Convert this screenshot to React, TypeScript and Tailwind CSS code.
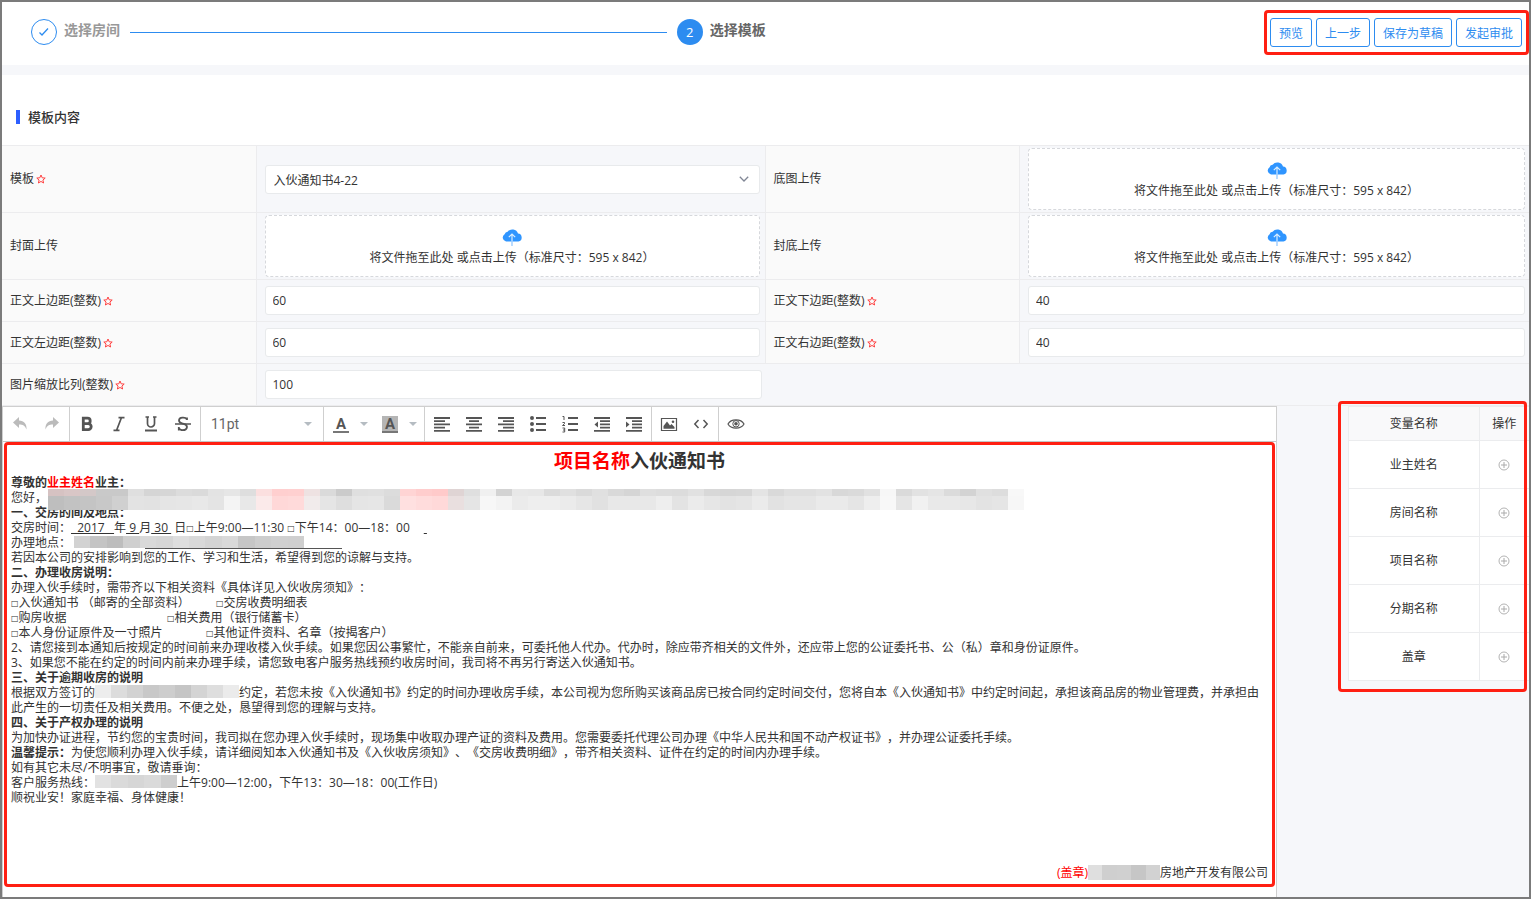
import type { ReactNode } from "react";

const variables = ["业主姓名", "房间名称", "项目名称", "分期名称", "盖章"];

const noticeMask = [
  ["#d6c2c2", "#bebebe"], ["#d9c6c6", "#c2c2c2"], ["#d4c8c8", "#c4c4c4"], ["#c9c9c9", "#c8c8c8"], ["#c9c9c9", "#d0d0d0"],
  ["#dfdfdf", "#e3e3e3"], ["#d5d5d5", "#e2e2e2"], ["#d6d6d6", "#e5e5e5"], ["#dcdcdc", "#e6e6e6"], ["#dadada", "#e8e8e8"],
  ["#e3e3e3", "#e4e4e4"], ["#e6e6e6", "#f4f4f4"], ["#dedede", "#e8e8e8"], ["#fbdfdf", "#fbeaea"], ["#ffcfcf", "#ffd8d8"],
  ["#ffd0d0", "#ffdada"], ["#eee2e2", "#f1ebeb"], ["#dadada", "#e5e5e5"], ["#cbcbcb", "#dedede"], ["#dfdfdf", "#e5e5e5"],
  ["#e0e0e0", "#e6e6e6"], ["#dcdcdc", "#dadada"], ["#ffd4d4", "#ffe0e0"], ["#ffcdcd", "#ffdcdc"], ["#ffcaca", "#ffd9d9"],
  ["#dfd4d4", "#e9dfdf"], ["#dfdfdf", "#e5e5e5"], ["#f0f0f0", "#f7f7f7"], ["#d3d3d3", "#f3f3f3"], ["#e8e8e8", "#ebebeb"],
  ["#e7e7e7", "#eeeeee"], ["#dbdbdb", "#eeeeee"], ["#e0e0e0", "#ebebeb"], ["#dadada", "#e6e6e6"], ["#e0e0e0", "#e1e1e1"],
  ["#d9d9d9", "#e8e8e8"], ["#d5d5d5", "#e8e8e8"], ["#dfdfdf", "#e8e8e8"], ["#dddddd", "#eeeeee"], ["#dcdcdc", "#e3e3e3"],
  ["#e1e1e1", "#ebebeb"], ["#d8d8d8", "#e6e6e6"], ["#d6d6d6", "#e3e3e3"], ["#d7d7d7", "#e5e5e5"], ["#e4e4e4", "#ebebeb"],
  ["#d9d9d9", "#e2e2e2"], ["#dfdfdf", "#e5e5e5"], ["#dfdfdf", "#e5e5e5"], ["#e2e2e2", "#eaeaea"], ["#d8d8d8", "#eaeaea"],
  ["#dadada", "#e5e5e5"], ["#e1e1e1", "#eeeeee"], ["#f7f7f7", "#f8f8f8"], ["#dadada", "#e5e5e5"], ["#e2e2e2", "#f1f1f1"],
  ["#e5e5e5", "#e9e9e9"], ["#dbdbdb", "#e9e9e9"], ["#d3d3d3", "#e7e7e7"], ["#e0e0e0", "#e3e3e3"], ["#dddddd", "#e5e5e5"],
  ["#f8f8f8", "#f7f7f7"],
];

const addressMask = ["#d2d2d2", "#c4c4c4", "#bdbdbd", "#cfcfcf", "#d9d9d9", "#d6d6d6", "#dedede", "#d9d9d9", "#d4d4d4", "#d9d9d9", "#c6c6c6", "#cdcdcd", "#d0d0d0", "#cfcfcf"];
const contractMask = ["#ededed", "#dcdcdc", "#d2d2d2", "#c8c8c8", "#cdcdcd", "#c5c5c5", "#d4d4d4", "#dedede", "#ebebeb"];
const phoneMask = ["#e2e2e2", "#dadada", "#d6d6d6", "#dadada", "#cecece"];
const companyMask = ["#dfdfdf", "#cfcfcf", "#d0d0d0", "#c6c6c6", "#d2d2d2"];

function Mask({ colors, className }: { colors: string[]; className: string }) {
  return (
    <span className={`overflow-hidden ${className}`} aria-hidden>
      {colors.map((color, index) => (
        <span key={index} className="flex-1" style={{ background: color }} />
      ))}
    </span>
  );
}

function RequiredStar() {
  return (
    <svg viewBox="0 0 20 20" className="ml-[2px] size-[10px] shrink-0" aria-hidden>
      <path d="M10 2l2.4 5.6 6 .5-4.6 4 1.4 5.9-5.2-3.1L4.800 18l1.400-5.900-4.600-4 6-.5z" fill="none" stroke="#ff4141" strokeWidth="2" strokeLinejoin="round" />
    </svg>
  );
}

function FieldLabel({ htmlFor, required, children }: { htmlFor: string; required?: boolean; children: ReactNode }) {
  return (
    <label htmlFor={htmlFor} className="flex items-center border-r border-b border-[#ececee] bg-[#fafafa] pl-2">
      {children}
      {required && <RequiredStar />}
    </label>
  );
}

function FieldCell({ last, children }: { last?: boolean; children: ReactNode }) {
  return (
    <div className={`flex items-center border-b border-[#ececee] pl-2 ${last ? "pr-1" : "border-r pr-[5px]"}`}>{children}</div>
  );
}

function NumberField({ id, label, value, last }: { id: string; label: string; value: string; last?: boolean }) {
  return (
    <>
      <FieldLabel htmlFor={id} required>
        {label}
      </FieldLabel>
      <FieldCell last={last}>
        <input
          id={id}
          defaultValue={value}
          className="my-[6px] h-[29px] w-full rounded-[3px] border border-[#e8eaec] bg-white px-[7px] outline-none"
        />
      </FieldCell>
    </>
  );
}

function UploadField({ id, label, last }: { id: string; label: string; last?: boolean }) {
  return (
    <>
      <FieldLabel htmlFor={id}>{label}</FieldLabel>
      <FieldCell last={last}>
        <button
          id={id}
          type="button"
          className="my-[2px] flex h-[62px] w-full flex-col items-center justify-center gap-1 rounded-[4px] border border-dashed border-[#d6d8dc] bg-white pt-[2px]"
        >
          <svg viewBox="0 0 20 17" className="h-[17px] w-5" aria-hidden>
            <path d="M4 12.500A4 4 0 0 1 2.600 5.200 4 4 0 0 1 5.600 2.700 6 6 0 0 1 16 4.600a4 4 0 0 1 .5 7.900z" fill="#2f95ff" />
            <path d="M10 5.200V12.500M6.800 8.200L10 5l3.200 3.200" fill="none" stroke="#d9edff" strokeWidth="1.200" />
            <path d="M10 12.500V17" stroke="#8cc4ff" strokeWidth="1.200" />
          </svg>
          <span className="leading-4">将文件拖至此处 或点击上传（标准尺寸：595 x 842）</span>
        </button>
      </FieldCell>
    </>
  );
}

function ToolButton({ label, children }: { label: string; children: ReactNode }) {
  return (
    <button type="button" aria-label={label} className="flex h-8 w-8 items-center justify-center text-[#555]">
      <svg viewBox="0 0 18 18" className="size-[18px]" fill="none" stroke="currentColor" strokeWidth="2" aria-hidden>
        {children}
      </svg>
    </button>
  );
}

function Caret() {
  return <span className="block border-x-4 border-t-4 border-x-transparent border-t-[#b5bcc2]" aria-hidden />;
}

function ColorButton({ label, filled }: { label: string; filled?: boolean }) {
  return (
    <button type="button" aria-label={label} className="flex h-8 w-[49px] items-center pl-2">
      <span
        className={`mr-[11px] h-[17px] w-4 border-b-2 border-[#777] text-center font-[Roboto,sans-serif] text-[15px] leading-4 font-bold text-[#555] ${filled ? "bg-[#b5b5b5]" : ""}`}
      >
        A
      </span>
      <Caret />
    </button>
  );
}

function ToolGroup({ children }: { children: ReactNode }) {
  return <div className="flex items-center border-r border-[#cfcfcf] px-px">{children}</div>;
}

function Toolbar() {
  return (
    <div className="flex h-[35px] border-b border-[#c5c5c5]">
      <ToolGroup>
        <ToolButton label="撤销">
          <path d="M8 2L2 7.500 8 13V9.500c4 0 6 1 7.500 5C16 9 13 5.500 8 5.500z" fill="#bbb" stroke="none" />
        </ToolButton>
        <ToolButton label="重做">
          <path d="M10 2l6 5.500L10 13V9.500c-4 0-6 1-7.500 5C2 9 5 5.500 10 5.500z" fill="#bbb" stroke="none" />
        </ToolButton>
      </ToolGroup>
      <ToolGroup>
        <ToolButton label="加粗">
          <path d="M5.300 3.200h4.200a2.700 2.700 0 0 1 0 5.400H5.300zM5.300 8.600h4.900a3 3 0 0 1 0 6H5.300z" strokeWidth="2.800" />
        </ToolButton>
        <ToolButton label="斜体">
          <path d="M8.500 2.700h6M3.500 15.300h6M11.500 2.500L6.500 15.500" strokeWidth="1.700" />
        </ToolButton>
        <ToolButton label="下划线">
          <path d="M5.500 2v6.500a3.500 3.500 0 0 0 7 0V2M3.500 2H7M11 2h3.500" strokeWidth="1.700" />
          <path d="M3 15.500h12" />
        </ToolButton>
        <ToolButton label="删除线">
          <path d="M13 5V2.500M13 4.500C11.500 1.800 5 2 5 5.500c0 3 3.500 2.800 5.500 3.700 4 1.600 2.800 6-1.500 6-2.500 0-3.700-1.200-4.200-2.500M4.800 15.500V12" strokeWidth="1.800" />
          <path d="M1 9h16" strokeWidth="1.500" />
        </ToolButton>
      </ToolGroup>
      <div className="relative flex w-[123px] items-center border-r border-[#cfcfcf]">
        <select
          aria-label="字号"
          className="w-full appearance-none bg-transparent pl-[10px] font-[Roboto,sans-serif] text-sm text-[#666] outline-none"
        >
          <option>11pt</option>
        </select>
        <span className="pointer-events-none absolute right-[11px]">
          <Caret />
        </span>
      </div>
      <ToolGroup>
        <ColorButton label="文字颜色" />
        <ColorButton label="背景颜色" filled />
      </ToolGroup>
      <ToolGroup>
        <ToolButton label="左对齐">
          <path d="M1 3h16M1 6.200h11M1 9.400h16M1 12.600h11M1 15.800h16" strokeWidth="1.800" />
        </ToolButton>
        <ToolButton label="居中">
          <path d="M1 3h16M4 6.200h10M1 9.400h16M4 12.600h10M1 15.800h16" strokeWidth="1.800" />
        </ToolButton>
        <ToolButton label="右对齐">
          <path d="M1 3h16M6 6.200h11M1 9.400h16M6 12.600h11M1 15.800h16" strokeWidth="1.800" />
        </ToolButton>
        <ToolButton label="无序列表">
          <path d="M7 3h10M7 9h10M7 15h10" strokeWidth="1.800" />
          <path d="M3 1a2 2 0 1 1 0 4 2 2 0 0 1 0-4zM3 7a2 2 0 1 1 0 4 2 2 0 0 1 0-4zM3 13a2 2 0 1 1 0 4 2 2 0 0 1 0-4z" fill="currentColor" stroke="none" />
        </ToolButton>
        <ToolButton label="有序列表">
          <path d="M7 3h10M7 9h10M7 15h10" strokeWidth="1.800" />
          <path d="M1.500 1.500H3V5M1.500 7.500h2v1.200L1.500 10.500h2.500M1.500 13h2.200v4H1.500M2 15h1.700" strokeWidth="1" />
        </ToolButton>
        <ToolButton label="减少缩进">
          <path d="M1 3h16M7 6.200h10M7 9.400h10M7 12.600h10M1 15.800h16" strokeWidth="1.800" />
          <path d="M5 6.500v6L1.500 9.500z" fill="currentColor" stroke="none" />
        </ToolButton>
        <ToolButton label="增加缩进">
          <path d="M1 3h16M7 6.200h10M7 9.400h10M7 12.600h10M1 15.800h16" strokeWidth="1.800" />
          <path d="M1 6.500v6l3.500-3z" fill="currentColor" stroke="none" />
        </ToolButton>
      </ToolGroup>
      <ToolGroup>
        <ToolButton label="插入图片">
          <path d="M1.500 3.500h15v12h-15z" strokeWidth="1.200" />
          <path d="M3.500 13.800V11L7 6.500l3 4 1.500-1.500 3 3v1.800zM13 5.500a1.300 1.300 0 1 1 0 2.600 1.300 1.300 0 0 1 0-2.600z" fill="currentColor" stroke="none" />
        </ToolButton>
        <ToolButton label="源代码">
          <path d="M6.500 5L2.800 9l3.700 4M11.500 5l3.700 4-3.700 4" strokeWidth="1.500" />
        </ToolButton>
      </ToolGroup>
      <div className="flex items-center px-px">
        <ToolButton label="预览">
          <path d="M1 9c3-5.500 13-5.500 16 0-3 5.500-13 5.500-16 0z" strokeWidth="1.200" />
          <circle cx="9" cy="8.800" r="3.200" strokeWidth="1" />
          <circle cx="9" cy="8.800" r="1.800" fill="currentColor" stroke="none" />
        </ToolButton>
      </div>
    </div>
  );
}

function Box() {
  return <span className="align-[1px] font-['DejaVu_Sans',sans-serif] text-[8px] leading-none">□</span>;
}

function NoticeDocument() {
  return (
    <article className="mr-px ml-px rounded-[4px] border-[3px] border-[#ff1f12] px-1 pt-[3px] pb-1 leading-[15px] text-[#333]">
      <h1 className="text-center text-[19px] leading-[27px] font-bold">
        <span className="text-[#ff0000]">项目名称</span>入伙通知书
      </h1>
      <p className="font-bold">
        尊敬的<span className="text-[#ff0000]">业主姓名</span>业主：
      </p>
      <p className="relative">
        您好，
        <span className="absolute -top-px left-[37px] flex h-[21px] w-[976px] flex-col" aria-hidden>
          <Mask colors={noticeMask.map((pair) => pair[0])} className="flex h-[7px]" />
          <Mask colors={noticeMask.map((pair) => pair[1])} className="flex h-[14px]" />
        </span>
      </p>
      <p className="font-bold">一、交房的间及地点：</p>
      <p>
        交房时间：<u>&nbsp;&nbsp;2017&nbsp;&nbsp;&nbsp;</u>年<u>&nbsp;9&nbsp;</u>月<u>&nbsp;30&nbsp;</u>&nbsp;日<Box />
        上午9:00—11:30 <Box />
        下午14：00—18：00<span className="ml-[14px]"><u>&nbsp;</u></span>
      </p>
      <p className="flex">
        办理地点：
        <span className="relative ml-[74px] h-[14px] w-[197px] border-b border-[#555]">
          <Mask colors={addressMask} className="absolute bottom-0 -left-[71px] flex h-3 w-[230px]" />
        </span>
      </p>
      <p>若因本公司的安排影响到您的工作、学习和生活，希望得到您的谅解与支持。</p>
      <p className="font-bold">二、办理收房说明：</p>
      <p>办理入伙手续时，需带齐以下相关资料《具体详见入伙收房须知》：</p>
      <p className="flex">
        <span className="w-[205px]"><Box />入伙通知书 （邮寄的全部资料）</span>
        <span><Box />交房收费明细表</span>
      </p>
      <p className="flex">
        <span className="w-[156px]"><Box />购房收据</span>
        <span><Box />相关费用（银行储蓄卡）</span>
      </p>
      <p className="flex">
        <span className="w-[195px]"><Box />本人身份证原件及一寸照片</span>
        <span><Box />其他证件资料、名章（按揭客户）</span>
      </p>
      <p>
        2、请您接到本通知后按规定的时间前来办理收楼入伙手续。如果您因公事繁忙，不能亲自前来，可委托他人代办。代办时，除应带齐相关的文件外，还应带上您的公证委托书、公（私）章和身份证原件。
      </p>
      <p>3、如果您不能在约定的时间内前来办理手续，请您致电客户服务热线预约收房时间，我司将不再另行寄送入伙通知书。</p>
      <p className="font-bold">三、关于逾期收房的说明</p>
      <p>
        根据双方签订的
        <Mask colors={contractMask} className="inline-flex h-[13px] w-36 align-top" />
        约定，若您未按《入伙通知书》约定的时间办理收房手续，本公司视为您所购买该商品房已按合同约定时间交付，您将自本《入伙通知书》中约定时间起，承担该商品房的物业管理费，并承担由此产生的一切责任及相关费用。不便之处，恳望得到您的理解与支持。
      </p>
      <p className="font-bold">四、关于产权办理的说明</p>
      <p>
        为加快办证进程，节约您的宝贵时间，我司拟在您办理入伙手续时，现场集中收取办理产证的资料及费用。您需要委托代理公司办理《中华人民共和国不动产权证书》，并办理公证委托手续。
      </p>
      <p>
        <b>温馨提示：</b>
        为使您顺利办理入伙手续，请详细阅知本入伙通知书及《入伙收房须知》、《交房收费明细》，带齐相关资料、证件在约定的时间内办理手续。
      </p>
      <p>如有其它未尽/不明事宜，敬请垂询：</p>
      <p>
        客户服务热线：
        <Mask colors={phoneMask} className="inline-flex h-[13px] w-[82px] align-top" />
        上午9:00—12:00，下午13：30—18：00(工作日)
      </p>
      <p>顺祝业安！家庭幸福、身体健康！</p>
      <p className="mt-[60px] text-right">
        <span className="text-[#ff0000]">(盖章)</span>
        <Mask colors={companyMask} className="inline-flex h-[15px] w-[72px] align-top" />
        房地产开发有限公司
      </p>
    </article>
  );
}

function VariableTable() {
  return (
    <aside className="relative w-[181px] shrink-0">
      <table className="w-full border-collapse border border-r-0 border-[#ebecee] bg-white text-center text-[#333]">
        <thead>
          <tr className="h-[34px] bg-[#f9f9fa]">
            <th className="border-r border-b border-[#ebecee] font-normal">变量名称</th>
            <th className="w-[50px] border-b border-[#ebecee] font-normal">操作</th>
          </tr>
        </thead>
        <tbody>
          {variables.map((name) => (
            <tr key={name} className="h-12">
              <td className="border-r border-b border-[#ebecee]">{name}</td>
              <td className="border-b border-[#ebecee]">
                <button type="button" aria-label={`插入${name}`} className="block w-full">
                  <svg viewBox="0 0 12 12" className="mx-auto size-3" fill="none" stroke="#aaa" aria-hidden>
                    <circle cx="6" cy="6" r="5" strokeWidth="0.900" />
                    <path d="M3 6h6M6 3v6" />
                  </svg>
                </button>
              </td>
            </tr>
          ))}
        </tbody>
      </table>
      <div className="pointer-events-none absolute -top-[5px] right-[2px] -left-[10px] h-[291px] rounded-[4px] border-[3px] border-[#ff1f12]" />
    </aside>
  );
}

function ActionButton({ children }: { children: ReactNode }) {
  return (
    <button type="button" className="h-[29px] rounded-[3px] border border-[#2d8cf0] bg-white px-2 pt-[2px] text-[#2d8cf0]">
      {children}
    </button>
  );
}

export default function App() {
  return (
    <div className="flex min-h-screen flex-col border-2 border-[#7b7b7b] bg-[#f6f7fa] font-['Open_Sans','Noto_Sans_CJK_SC',sans-serif] text-xs text-[#333] [text-spacing-trim:space-all]">
      <header className="flex h-[63px] items-start bg-white pl-[29px]">
        <ol className="grid flex-1 grid-cols-[11fr_10fr] pt-[17px] text-sm font-bold">
          <li className="flex items-center">
            <span className="flex size-[26px] items-center justify-center rounded-full border border-[#2d8cf0]">
              <svg viewBox="0 0 12 12" className="size-3" fill="none" stroke="#2d8cf0" strokeWidth="1.300" aria-hidden>
                <path d="M1.500 6.500l2.500 2.500 6-6.500" />
              </svg>
            </span>
            <span className="ml-[7px] pb-1 text-[#999]">选择房间</span>
            <span className="mr-[10px] ml-[10px] h-px flex-1 bg-[#2d8cf0]" />
          </li>
          <li className="flex items-center">
            <span className="flex size-[26px] items-center justify-center rounded-full bg-[#2d8cf0] text-[13px] font-normal text-white">2</span>
            <span className="ml-[7px] pb-1 text-[#666]">选择模板</span>
          </li>
        </ol>
        <div className="mt-2 flex gap-1 rounded-[4px] border-[3px] border-[#ff1f12] py-[5px] pr-1 pl-[3px]">
          <ActionButton>预览</ActionButton>
          <ActionButton>上一步</ActionButton>
          <ActionButton>保存为草稿</ActionButton>
          <ActionButton>发起审批</ActionButton>
        </div>
      </header>

      <section className="mt-[10px]">
        <div className="flex items-center bg-white pt-8 pb-[18px] pl-[14px]">
          <span className="h-[14px] w-1 bg-[#2d5fff]" />
          <h2 className="ml-2 text-[13px] leading-5 font-medium">模板内容</h2>
        </div>
        <form className="grid grid-cols-[1fr_2fr_1fr_2fr] border-t border-[#ececee]">
          <FieldLabel htmlFor="template" required>
            模板
          </FieldLabel>
          <FieldCell>
            <div className="relative flex w-full items-center">
              <select
                id="template"
                className="h-[29px] w-full appearance-none rounded-[3px] border border-[#e8eaec] bg-white px-2 pt-1 outline-none"
              >
                <option>入伙通知书4-22</option>
              </select>
              <svg viewBox="0 0 12 12" className="pointer-events-none absolute right-[10px] size-3" fill="none" stroke="#808695" strokeWidth="1.300" aria-hidden>
                <path d="M1.800 3.800L6 8l4.200-4.200" />
              </svg>
            </div>
          </FieldCell>
          <UploadField id="background" label="底图上传" last />
          <UploadField id="cover" label="封面上传" />
          <UploadField id="back-cover" label="封底上传" last />
          <NumberField id="margin-top" label="正文上边距(整数)" value="60" />
          <NumberField id="margin-bottom" label="正文下边距(整数)" value="40" last />
          <NumberField id="margin-left" label="正文左边距(整数)" value="60" />
          <NumberField id="margin-right" label="正文右边距(整数)" value="40" last />
          <NumberField id="image-scale" label="图片缩放比列(整数)" value="100" last />
          <div className="col-span-2 border-b border-[#ececee]" />
        </form>
      </section>

      <main className="flex flex-1 justify-between">
        <div className="w-[83.5%] border-x border-t border-[#cfcfcf] bg-white">
          <Toolbar />
          <NoticeDocument />
        </div>
        <VariableTable />
      </main>
    </div>
  );
}
